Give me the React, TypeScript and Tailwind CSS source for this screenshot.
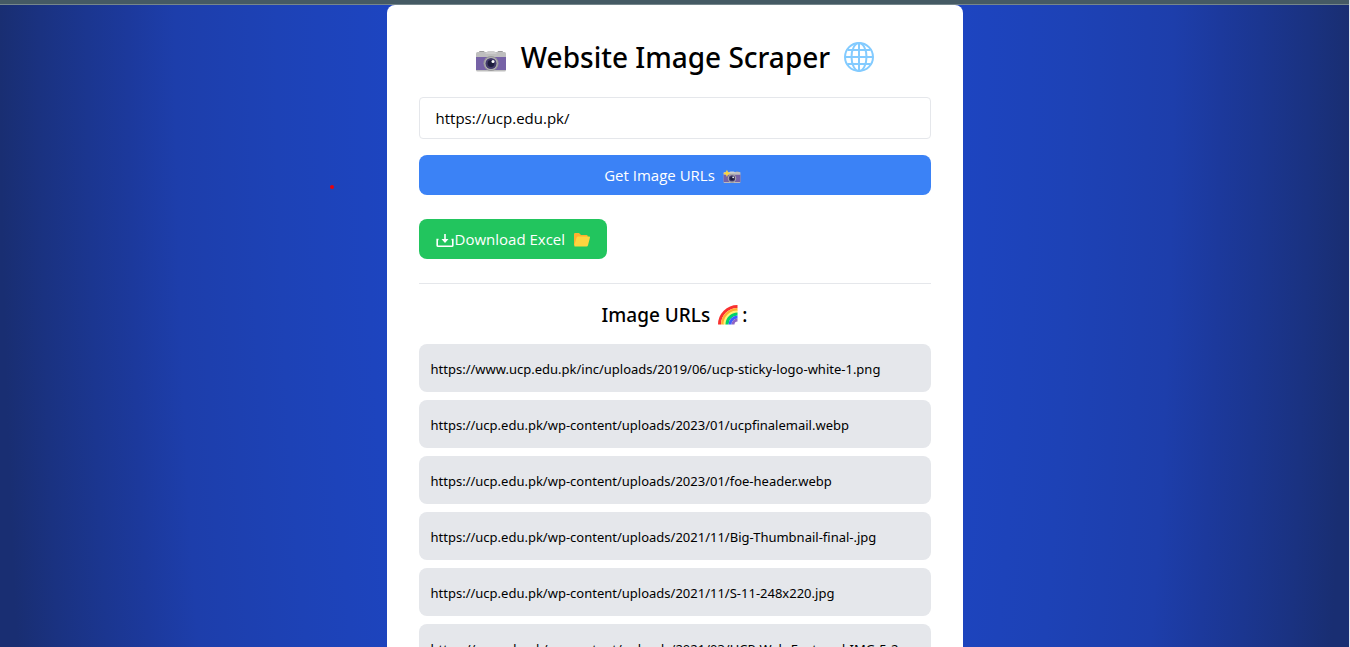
import { useState } from 'react';

const imageUrls = [
  'https://www.ucp.edu.pk/inc/uploads/2019/06/ucp-sticky-logo-white-1.png',
  'https://ucp.edu.pk/wp-content/uploads/2023/01/ucpfinalemail.webp',
  'https://ucp.edu.pk/wp-content/uploads/2023/01/foe-header.webp',
  'https://ucp.edu.pk/wp-content/uploads/2021/11/Big-Thumbnail-final-.jpg',
  'https://ucp.edu.pk/wp-content/uploads/2021/11/S-11-248x220.jpg',
  'https://ucp.edu.pk/wp-content/uploads/2021/03/UCP-Web-Featured-IMG-5-2',
];

function Camera({ className, flash = false }: { className?: string; flash?: boolean }) {
  return (
    <svg viewBox="0 0 32 24" className={className} aria-hidden="true">
      <path d="M4 4V3Q4 2 5 2H8.500Q9.500 2 9.500 3V4ZM22.500 4V3Q22.500 2 23.500 2H27Q28 2 28 3V4Z" fill="#9b9b9b" />
      <rect x="1" y="3" width="30" height="19.500" rx="1.500" fill="#bebebe" />
      <path d="M10 5 12 2.700Q12.500 2 13.500 2H18.500Q19.500 2 20 2.700L22 5Z" fill="#cdcdcd" />
      <rect x="1" y="8" width="30" height="13" fill="#7662a6" />
      <circle cx="16" cy="14.500" r="7.500" fill="#9b9b9b" />
      <circle cx="16" cy="14.500" r="6.300" fill="#bebebe" />
      <circle cx="16" cy="14.500" r="5.600" fill="#433b6b" />
      <circle cx="16" cy="14.500" r="3.400" fill="#1c1c3c" />
      <circle cx="18" cy="12.500" r="1.500" fill="#fff" />
      {flash && <path d="M7-1 9 3.500 13.500 5.500 9 7.500 7 12 5 7.500.5 5.500 5 3.500Z" fill="#fcd53f" />}
    </svg>
  );
}

function Globe({ className }: { className?: string }) {
  return (
    <svg viewBox="0 0 30 30" className={className} fill="none" stroke="#83cbff" strokeWidth="2" aria-hidden="true">
      <circle cx="15" cy="15" r="14" />
      <ellipse cx="15" cy="15" rx="7.500" ry="14" />
      <path d="M15 1V29M1 15H29M3.500 8H26.500M3.500 22H26.500" />
    </svg>
  );
}

function Folder({ className }: { className?: string }) {
  return (
    <svg viewBox="0 0 18 16" className={className} aria-hidden="true">
      <path d="M1 3.200Q1 2 2.200 2H6L8 4H13.500Q14.700 4 14.700 5.200V14H1Z" fill="#ffb02e" />
      <path d="M5.200 5.500H16.200Q17.300 5.500 17 6.600L15 14.300Q14.700 15.500 13.500 15.500H2Q1 15.500 1.300 14.300L3.500 6.800Q3.900 5.500 5.200 5.500Z" fill="#fcd53f" />
    </svg>
  );
}

const rainbow = [
  { r: 18, color: '#f8312f' },
  { r: 15, color: '#ffb02e' },
  { r: 12.5, color: '#fff478' },
  { r: 10.5, color: '#00d26a' },
  { r: 7.5, color: '#3f5fff' },
  { r: 4.5, color: '#8d65c5' },
];

function Rainbow({ className }: { className?: string }) {
  return (
    <svg viewBox="0 0 20 20" className={className} fill="none" strokeWidth="3" aria-hidden="true">
      {rainbow.map(({ r, color }) => (
        <path key={r} d={`M${19.5 - r} 19.500A${r} ${r} 0 0 1 19.500 ${19.5 - r}`} stroke={color} />
      ))}
    </svg>
  );
}

function DownloadIcon({ className }: { className?: string }) {
  return (
    <svg viewBox="0 0 18 16" className={className} fill="none" stroke="currentColor" strokeWidth="1.600" aria-hidden="true">
      <path d="M2.500 8.500H1.200V14.500Q1.200 15.200 2.200 15.200H15.800Q16.800 15.200 16.800 14.500V8.500H15.500" />
      <path d="M9 3V9" />
      <path d="M5.500 8H12.500L9 12Z" fill="currentColor" stroke="none" />
    </svg>
  );
}

export default function App() {
  const [url, setUrl] = useState('https://ucp.edu.pk/');

  return (
    <div className="relative min-h-screen border-r border-slate-200 bg-[radial-gradient(ellipse_50%_450vh_at_50%_0,#1d45c2_40%,#1d42b6_59%,#1d3eab_74%,#1c399c_81%,#1b3690_87%,#1a3281_94%,#192e72_100%)] font-['Open_Sans','Noto_Sans',sans-serif] text-black">
      <div className="h-[5px] border-b border-[#75868c] bg-[#455a64]" />
      <span className="absolute top-[185px] left-[330px] size-1 rounded-full bg-red-600" />

      <main className="mx-auto max-w-xl rounded-lg bg-white p-8">
        <h1 className="mb-5 flex items-center justify-center gap-3.5 font-['Noto_Sans'] text-[28px] leading-10 font-medium">
          <Camera className="mt-2 h-6 w-8" />
          Website Image Scraper
          <Globe className="size-[30px]" />
        </h1>

        <input
          type="text"
          aria-label="Website URL"
          value={url}
          onChange={(e) => setUrl(e.target.value)}
          className="mb-4 block w-full rounded border border-gray-200 px-4 py-2 text-[15px] leading-6 outline-none"
        />
        <button
          type="button"
          className="mb-6 flex w-full items-center justify-center gap-2 rounded-lg bg-[#3b82f6] py-2 pr-5 pl-4 text-[15px] leading-6 text-white"
        >
          Get Image URLs
          <Camera flash className="mt-1 h-4 w-[18px] overflow-visible" />
        </button>
        <button type="button" className="flex items-center rounded-lg bg-[#22c55e] px-4 py-2 text-[15px] leading-6 text-white">
          <DownloadIcon className="h-4 w-5" />
          Download Excel
          <Folder className="ml-2 h-4 w-[18px]" />
        </button>

        <section className="mt-6 border-t border-gray-200 pt-4">
          <h2 className="mb-3.5 flex items-center justify-center font-['Noto_Sans'] text-[19px] leading-[30px] font-medium">
            Image URLs
            <Rainbow className="mr-1 ml-2 size-5" />:
          </h2>
          <ul className="space-y-2">
            {imageUrls.map((src) => (
              <li key={src} className="rounded-lg bg-gray-200 p-3">
                <a href={src} className="font-['Noto_Sans'] text-[13px] break-words">
                  {src}
                </a>
              </li>
            ))}
          </ul>
        </section>
      </main>
    </div>
  );
}
